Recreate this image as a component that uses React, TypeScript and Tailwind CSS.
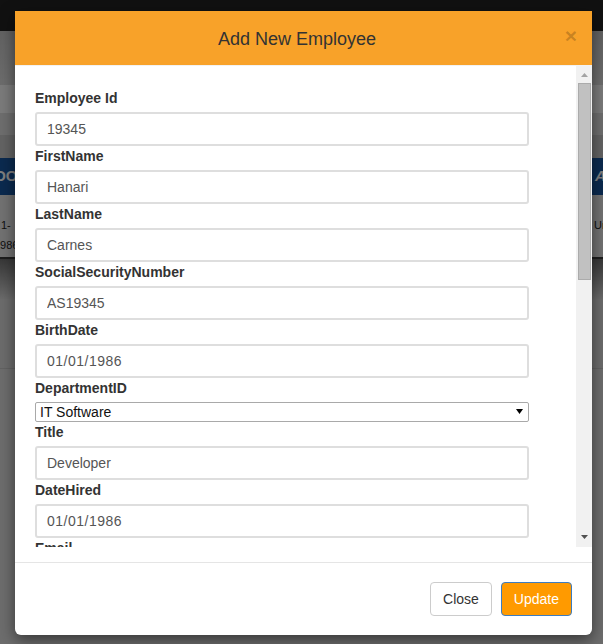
import React from "react";

type Field = {
  label: string;
  value?: string;
  select?: string;
  date?: boolean;
};

const fields: Field[] = [
  { label: "Employee Id", value: "19345" },
  { label: "FirstName", value: "Hanari" },
  { label: "LastName", value: "Carnes" },
  { label: "SocialSecurityNumber", value: "AS19345" },
  { label: "BirthDate", value: "01/01/1986", date: true },
  { label: "DepartmentID", select: "IT Software" },
  { label: "Title", value: "Developer" },
  { label: "DateHired", value: "01/01/1986", date: true },
  { label: "Email", value: "" },
];

function FormField({ field }: { field: Field }) {
  return (
    <div className="flex flex-col">
      <label className="block h-5 leading-5 mb-[4px] text-[14px] font-bold text-[#333]">
        {field.label}
      </label>
      {field.select ? (
        <div className="relative w-[494px]">
          <select
            defaultValue={field.select}
            className="appearance-none block w-full h-[20px] border border-[#a9a9a9] rounded-[2px] bg-white pl-[4px] text-[14px] leading-[18px] text-[#111] outline-none"
          >
            <option>{field.select}</option>
            <option>HR</option>
            <option>Finance</option>
          </select>
          <svg
            className="absolute right-[6px] top-[7px] pointer-events-none"
            width="7"
            height="5"
            viewBox="0 0 7 5"
          >
            <path d="M0 0 H7 L3.5 5 Z" fill="#000" />
          </svg>
        </div>
      ) : (
        <input
          type="text"
          defaultValue={field.value}
          readOnly
          className={`block w-[494px] h-[34px] border-2 border-[#dedede] rounded-[3px] bg-white px-[10px] text-[14px] text-[#555] outline-none ${
            field.date ? "tracking-[0.5px]" : ""
          }`}
        />
      )}
    </div>
  );
}

function ScrollBar() {
  return (
    <div className="w-[16px] bg-[#f1f1f1] flex flex-col items-center">
      <div className="h-[17px] w-full flex items-center justify-center">
        <svg width="7" height="4" viewBox="0 0 7 4">
          <path d="M0 4 L3.5 0 L7 4 Z" fill="#a3a3a3" />
        </svg>
      </div>
      <div className="w-[13px] h-[197px] ml-[1px] bg-[#c1c1c1] border border-[#ababab]" />
      <div className="flex-1" />
      <div className="h-[16px] w-full flex items-center justify-center pb-[4px]">
        <svg width="7" height="4" viewBox="0 0 7 4">
          <path d="M0 0 H7 L3.5 4 Z" fill="#505050" />
        </svg>
      </div>
    </div>
  );
}

export default function App() {
  return (
    <div className="relative w-[603px] h-[644px] overflow-hidden font-['Liberation_Sans',Arial,sans-serif]">
      {/* page behind the dialog */}
      <div className="flex flex-col h-full">
        <div className="h-[31px] bg-[#222]" />
        <div className="h-[54px] bg-gradient-to-b from-[#c4c4c4] to-[#dadada]" />
        <div className="h-[28px] bg-[#f6f6f6]" />
        <div className="h-[22px] bg-[#dcdcdc]" />
        <div className="h-[23px] bg-[#c6c6c6]" />
        <div className="h-[37px] bg-[#16549e] flex items-center text-white font-bold text-[15px] whitespace-nowrap">
          <div className="w-[595px] shrink-0">
            <span className="ml-[-5px]">DOB</span>
          </div>
          <span className="shrink-0 italic">Address</span>
        </div>
        <div className="h-[64px] bg-[#e4e4e4] border-b-2 border-[#3a3a3a] flex text-[11px] text-[#222] whitespace-nowrap">
          <div className="w-[594px] shrink-0 flex flex-col pt-[20px] leading-[20px]">
            <span className="ml-[1px]">1-</span>
            <span className="ml-[-6px]">1986</span>
          </div>
          <span className="shrink-0 pt-[20px] leading-[20px]">Unit</span>
        </div>
        <div className="h-[40px] bg-gradient-to-b from-[#707070] to-[#d6d6d6]" />
        <div className="h-[70px] bg-[#d8d8d8] border-b border-[#c4c4c4]" />
        <div className="flex-1 bg-[#dadada]" />
      </div>

      {/* backdrop */}
      <div className="absolute inset-0 bg-black/50" />

      {/* dialog */}
      <div className="absolute left-[15px] top-[11px] w-[577px] bg-white rounded-b-[6px] shadow-[0_5px_15px_rgba(0,0,0,0.5)] flex flex-col">
        <div className="relative h-[55px] bg-[#f8a229] border-b border-[#f2f2f2] px-[15px] flex items-center">
          <h4 className="w-full pr-[13px] text-center text-[18px] text-[#333] leading-[20px] mt-[1px]">
            Add New Employee
          </h4>
          <button className="absolute right-[15px] top-[14px] text-[21px] font-bold leading-[21px] text-black/20">
            ×
          </button>
        </div>

        <div className="h-[481px] flex">
          <div className="flex-1 overflow-hidden pl-[20px] pt-[22px]">
            <div className="flex flex-col">
              {fields.map((f) => (
                <FormField key={f.label} field={f} />
              ))}
            </div>
          </div>
          <ScrollBar />
        </div>

        <div className="h-[15px]" />

        <div className="border-t border-[#e5e5e5] pt-[19px] pb-[19px] pr-[20px] flex justify-end gap-[9px]">
          <button className="h-[34px] px-[12px] border border-[#ccc] rounded-[4px] bg-white text-[14px] text-[#333]">
            Close
          </button>
          <button className="h-[34px] px-[12px] border border-[#3d7cc0] rounded-[4px] bg-[#ff9a00] text-[14px] text-white">
            Update
          </button>
        </div>
      </div>
    </div>
  );
}
